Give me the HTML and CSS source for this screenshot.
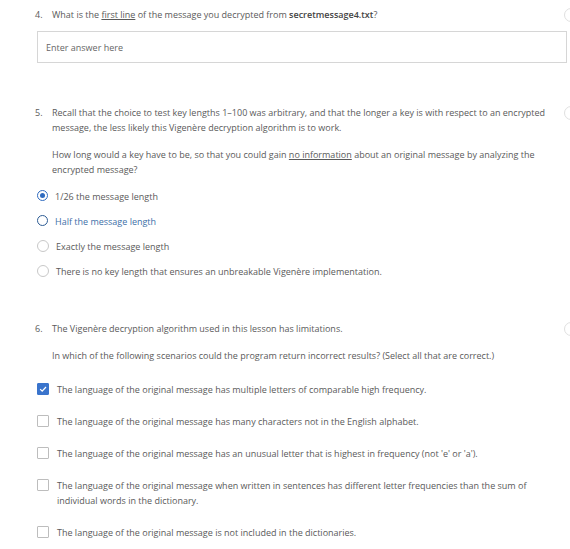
FILE: index.html
```html
<!DOCTYPE html>
<html>
<head>
<meta charset="utf-8">
<link rel="stylesheet" href="styles.css">
</head>
<body>
<div class="page">
  <section class="q q4">
    <div class="qrow">
      <span class="num">4.</span>
      <div class="body">
        <p class="line">What is the <u>first line</u> of the message you decrypted from <b>secretmessage4.txt</b>?</p>
      </div>
    </div>
    <div class="answer">Enter answer here</div>
    <span class="side"></span>
  </section>

  <section class="q q5">
    <div class="qrow">
      <span class="num">5.</span>
      <div class="body">
        <p class="line">Recall that the choice to test key lengths 1–100 was arbitrary, and that the longer a key is with respect to an encrypted message, the less likely this Vigenère decryption algorithm is to work.</p>
        <p class="line para">How long would a key have to be, so that you could gain <u>no information</u> about an original message by analyzing the encrypted message?</p>
      </div>
    </div>
    <ul class="opts radios">
      <li class="opt"><span class="radio sel"></span><span>1/26 the message length</span></li>
      <li class="opt hover"><span class="radio hov"></span><span>Half the message length</span></li>
      <li class="opt"><span class="radio"></span><span>Exactly the message length</span></li>
      <li class="opt"><span class="radio"></span><span>There is no key length that ensures an unbreakable Vigenère implementation.</span></li>
    </ul>
    <span class="side"></span>
  </section>

  <section class="q q6">
    <div class="qrow">
      <span class="num">6.</span>
      <div class="body">
        <p class="line">The Vigenère decryption algorithm used in this lesson has limitations.</p>
        <p class="line para">In which of the following scenarios could the program return incorrect results? (Select all that are correct.)</p>
      </div>
    </div>
    <ul class="opts checks">
      <li class="opt"><span class="box on"><svg viewBox="0 0 12 12" width="12" height="12"><path d="M2.6 6.2 L5 8.5 L9.6 3.6" fill="none" stroke="#fff" stroke-width="1.5"/></svg></span><span>The language of the original message has multiple letters of comparable high frequency.</span></li>
      <li class="opt"><span class="box"></span><span>The language of the original message has many characters not in the English alphabet.</span></li>
      <li class="opt"><span class="box"></span><span>The language of the original message has an unusual letter that is highest in frequency (not 'e' or 'a').</span></li>
      <li class="opt"><span class="box"></span><span>The language of the original message when written in sentences has different letter frequencies than the sum of individual words in the dictionary.</span></li>
      <li class="opt"><span class="box"></span><span>The language of the original message is not included in the dictionaries.</span></li>
    </ul>
    <span class="side"></span>
  </section>
</div>
</body>
</html>
```

FILE: styles.css
```css
html, body {
  margin: 0;
  padding: 0;
  background: #fff;
}
body {
  font-family: "Open Sans", "DejaVu Sans", sans-serif;
  font-size: 9px;
  line-height: 15px;
  color: #5a5a5a;
  overflow: hidden;
  width: 570px;
  height: 549px;
}
.page {
  padding: 7px 0 0 35px;
  width: 535px;
  overflow: hidden;
}
.q {
  position: relative;
}
.qrow {
  display: flex;
}
.num {
  width: 17px;
  flex: none;
}
.body {
  flex: 1;
  padding-right: 18px;
}
.line {
  margin: 0;
}
.para {
  margin-top: 12px;
}
u {
  text-decoration: underline;
  text-underline-offset: 1px;
}
b {
  font-weight: 600;
  color: #444;
}
.answer {
  margin: 9px 3px 0 2px;
  height: 30px;
  border: 1px solid #d6d6d6;
  padding-left: 8px;
  display: flex;
  align-items: center;
  color: #666;
}
.q5 {
  margin-top: 42px;
}
.q6 {
  margin-top: 42px;
}
.opts {
  list-style: none;
  margin: 0;
  padding: 0 0 0 2px;
}
.radios {
  margin-top: 12px;
  display: flex;
  flex-direction: column;
  gap: 10px;
}
.checks {
  margin-top: 19px;
  display: flex;
  flex-direction: column;
  gap: 17px;
}
.opt {
  display: flex;
  align-items: flex-start;
  gap: 7px;
  padding-right: 20px;
}
.opt.hover {
  color: #3d6fa8;
}
.radio {
  width: 10px;
  height: 10px;
  border: 1px solid #c8c8c8;
  border-radius: 50%;
  flex: none;
  margin-top: 1px;
  box-sizing: content-box;
  position: relative;
}
.radio.sel {
  border: 1.5px solid #2f6bc0;
  width: 9px;
  height: 9px;
}
.radio.sel::after {
  content: "";
  position: absolute;
  left: 2px;
  top: 2px;
  width: 5px;
  height: 5px;
  border-radius: 50%;
  background: #2f6bc0;
}
.radio.hov {
  border: 1.5px solid #2c5b94;
  width: 9px;
  height: 9px;
}
.box {
  width: 10px;
  height: 10px;
  border: 1px solid #bdbdbd;
  border-radius: 1px;
  flex: none;
  margin-top: 1px;
  margin-right: 1px;
  display: flex;
  align-items: center;
  justify-content: center;
}
.box.on {
  background: #3a74cc;
  border-color: #3a74cc;
}
.box svg {
  width: 10px;
  height: 10px;
}
.side {
  position: absolute;
  left: 529px;
  top: 1px;
  width: 12px;
  height: 12px;
  border: 1px solid #e0e0e0;
  border-radius: 50%;
}
```
